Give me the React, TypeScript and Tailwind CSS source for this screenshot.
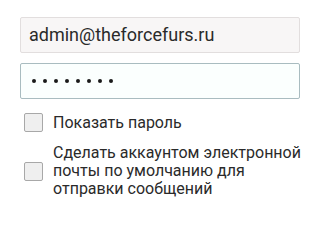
import React from "react";

export default function App() {
  const font = { fontFamily: "Roboto, 'Noto Sans', sans-serif" };
  return (
    <div className="w-[320px] h-[200px] bg-white overflow-hidden" style={font}>
      <div className="pt-[17px] pl-[20px] pr-[20px] flex flex-col gap-[10px]">
        <div className="h-[36px] w-[280px] border border-[#e2dede] bg-[#f8f6f6] rounded-[2px] flex items-center pl-[8px]">
          <span className="text-[18px] text-[#2a2a2a] leading-none">admin@theforcefurs.ru</span>
        </div>
        <div className="h-[36px] w-[280px] border border-[#a9bcc0] bg-[#fbfffe] rounded-[2px] flex items-center pl-[11px] gap-[7px]">
          {Array.from({ length: 8 }).map((_, i) => (
            <span key={i} className="w-[4px] h-[4px] rounded-full bg-[#1a1a1a]" />
          ))}
        </div>
      </div>
      <div className="mt-[14px] pl-[24px] flex items-center gap-[10px]">
        <div className="w-[19px] h-[19px] border border-[#a8a8a8] bg-[#efefef] rounded-[2px] shrink-0" />
        <span className="text-[16px] text-[#2a2a2a] leading-[18px]">Показать пароль</span>
      </div>
      <div className="mt-[12px] pl-[24px] flex items-center gap-[10px]">
        <div className="w-[19px] h-[19px] border border-[#a8a8a8] bg-[#efefef] rounded-[2px] shrink-0" />
        <span className="text-[16px] text-[#2a2a2a] leading-[18px] w-[260px]">
          Сделать аккаунтом электронной почты по умолчанию для отправки сообщений
        </span>
      </div>
    </div>
  );
}
